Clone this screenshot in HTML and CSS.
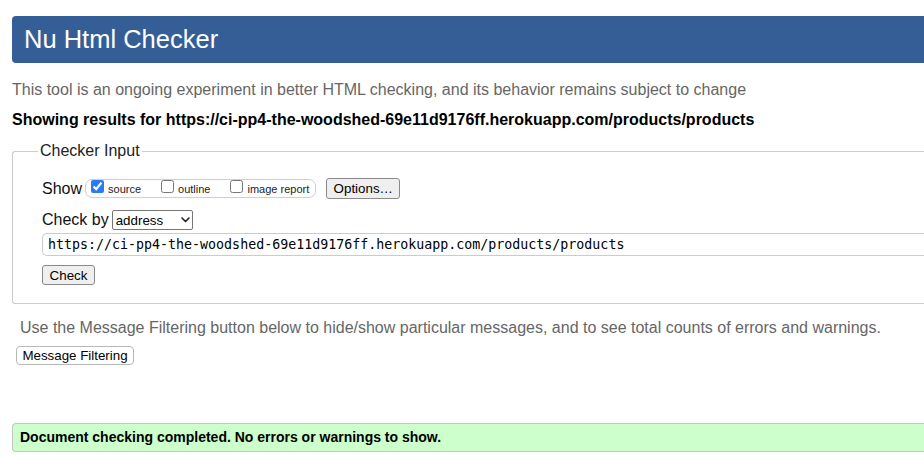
FILE: index.html
```html
<!DOCTYPE html>
<html lang="en">
<head>
<meta charset="utf-8">
<title>Nu Html Checker</title>
<link rel="stylesheet" href="styles.css">
</head>
<body>
<div class="page">
  <h1 class="banner">Nu Html Checker</h1>
  <p class="intro">This tool is an ongoing experiment in better HTML checking, and its behavior remains subject to change</p>
  <p class="showing">Showing results for https://ci-pp4-the-woodshed-69e11d9176ff.herokuapp.com/products/products</p>

  <fieldset class="checker">
    <legend class="checker-legend">Checker Input</legend>
    <div class="row show-row">
      <span class="row-label">Show</span>
      <div class="opts">
        <label class="opt"><input type="checkbox" class="cb" checked><span class="opt-text">source</span></label>
        <label class="opt"><input type="checkbox" class="cb"><span class="opt-text">outline</span></label>
        <label class="opt"><input type="checkbox" class="cb"><span class="opt-text">image report</span></label>
      </div>
      <button type="button" class="btn btn-options">Options…</button>
    </div>
    <div class="row by-row">
      <span class="row-label">Check by</span>
      <span class="select-wrap">
        <select class="select"><option>address</option></select>
        <svg class="chev" width="9" height="6" viewBox="0 0 9 6"><path d="M1 1 L4.5 4.5 L8 1" fill="none" stroke="#222" stroke-width="1.6" stroke-linecap="round" stroke-linejoin="round"/></svg>
      </span>
    </div>
    <input class="url" type="text" value="https://ci-pp4-the-woodshed-69e11d9176ff.herokuapp.com/products/products">
    <button type="button" class="btn btn-check">Check</button>
  </fieldset>

  <p class="filter-note">Use the Message Filtering button below to hide/show particular messages, and to see total counts of errors and warnings.</p>
  <button type="button" class="btn-filter">Message Filtering</button>

  <div class="success">Document checking completed. No errors or warnings to show.</div>
</div>
</body>
</html>
```
FILE: styles.css
```css
html, body {
  margin: 0;
  padding: 0;
  overflow: hidden;
  background: #fff;
}

body {
  font-family: "Liberation Sans", Arial, Helvetica, sans-serif;
  color: #000;
}

.page {
  width: 912px;
  padding: 16px 0 0 12px;
}

.banner {
  margin: 0;
  height: 47px;
  line-height: 47px;
  padding-left: 12px;
  font-size: 25.5px;
  font-weight: normal;
  color: #fff;
  background: #365e96;
  border-radius: 4px 0 0 4px;
}

.intro {
  margin: 17px 0 0;
  font-size: 16px;
  line-height: 20px;
  color: #666;
}

.showing {
  margin: 10px 0 0;
  font-size: 16px;
  line-height: 20px;
  font-weight: bold;
}

.checker {
  margin: 12px 0 0;
  padding: 0 0 18px 29px;
  border: 1px solid #cbcbcb;
  border-right: 0;
  border-radius: 3px 0 0 3px;
  min-width: 0;
}

.checker-legend {
  margin-left: -4px;
  padding: 0 2px;
  font-size: 16px;
  line-height: 18px;
  color: #222;
}

.row {
  display: flex;
  align-items: center;
}

.row-label {
  font-size: 16px;
  line-height: 18px;
  color: #111;
}

.show-row {
  margin-top: 17px;
  height: 23px;
}

.opts {
  display: flex;
  align-items: flex-start;
  gap: 20px;
  height: 17px;
  margin-left: 3px;
  padding: 0 6px 0 5px;
  border: 1px solid #cfcfcf;
  border-radius: 7px;
}

.opt {
  display: flex;
  align-items: flex-start;
  gap: 4px;
}

.cb {
  width: 13px;
  height: 13px;
  margin: 0;
  accent-color: #2a7cf6;
}

.opt-text {
  padding-top: 3px;
  font-size: 11px;
  line-height: 12px;
  color: #222;
}

.btn {
  font-family: "Liberation Sans", Arial, Helvetica, sans-serif;
  font-size: 13.33px;
  color: #000;
  background: #efefef;
  border: 1px solid #8a8a8a;
  border-radius: 3px;
  padding: 0 6px;
  white-space: nowrap;
}

.btn-options {
  margin-left: 10px;
  height: 21px;
  width: 74px;
}

.by-row {
  margin-top: 10px;
  height: 20px;
}

.select-wrap {
  position: relative;
  display: inline-block;
  margin-left: 3px;
  height: 20px;
}

.select {
  appearance: none;
  -webkit-appearance: none;
  width: 81px;
  height: 20px;
  margin: 0;
  padding: 0 0 0 3px;
  font-family: "Liberation Sans", Arial, Helvetica, sans-serif;
  font-size: 13.33px;
  color: #000;
  background: #fff;
  border: 1px solid #767676;
  border-radius: 2px;
}

.chev {
  position: absolute;
  left: 69px;
  top: 7px;
  pointer-events: none;
}

.url {
  display: block;
  box-sizing: border-box;
  width: 100%;
  height: 23px;
  margin: 3px 0 0;
  padding: 0 5px;
  font-family: "DejaVu Sans Mono", Menlo, monospace;
  font-size: 13.3px;
  color: #000;
  background: #fff;
  border: 1px solid #cbcbcb;
  border-right: 0;
  border-radius: 5px 0 0 5px;
  outline: none;
}

.btn-check {
  display: block;
  margin-top: 9px;
  height: 20px;
  width: 53px;
}

.filter-note {
  margin: 14px 0 0 8px;
  font-size: 16px;
  line-height: 20px;
  color: #666;
}

.btn-filter {
  display: block;
  margin: 8px 0 0 4px;
  height: 19px;
  width: 118px;
  padding: 0;
  white-space: nowrap;
  font-family: "Liberation Sans", Arial, Helvetica, sans-serif;
  font-size: 13.33px;
  color: #000;
  background: #fff;
  border: 1px solid #b8b8b8;
  border-radius: 4px;
}

.success {
  margin-top: 58px;
  height: 27px;
  line-height: 27px;
  padding: 0 7px;
  font-size: 14px;
  font-weight: bold;
  color: #000;
  background: #ccffcc;
  border: 1px solid #c6c6c6;
  border-right: 0;
  border-radius: 4px 0 0 4px;
}
```
